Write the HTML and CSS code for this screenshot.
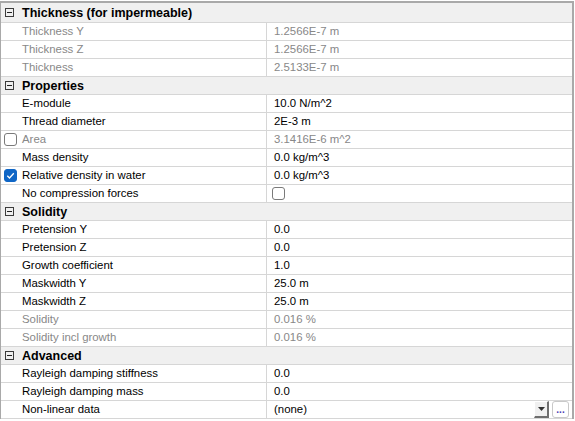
FILE: index.html
```html
<!DOCTYPE html>
<html>
<head>
<meta charset="utf-8">
<link rel="stylesheet" href="styles.css">
</head>
<body>
<div class="grid">
  <div class="cat first"><span class="toggle"></span><span class="cat-title">Thickness (for impermeable)</span></div>
  <div class="row dis"><div class="mg"></div><div class="lbl">Thickness Y</div><div class="val">1.2566E-7 m</div></div>
  <div class="row dis"><div class="mg"></div><div class="lbl">Thickness Z</div><div class="val">1.2566E-7 m</div></div>
  <div class="row dis"><div class="mg"></div><div class="lbl">Thickness</div><div class="val">2.5133E-7 m</div></div>

  <div class="cat"><span class="toggle"></span><span class="cat-title">Properties</span></div>
  <div class="row"><div class="mg"></div><div class="lbl">E-module</div><div class="val">10.0 N/m^2</div></div>
  <div class="row"><div class="mg"></div><div class="lbl">Thread diameter</div><div class="val">2E-3 m</div></div>
  <div class="row dis"><div class="mg"><span class="cb"></span></div><div class="lbl">Area</div><div class="val">3.1416E-6 m^2</div></div>
  <div class="row"><div class="mg"></div><div class="lbl">Mass density</div><div class="val">0.0 kg/m^3</div></div>
  <div class="row"><div class="mg"><span class="cb on"><svg viewBox="0 0 13 13" width="13" height="13"><path d="M3.3 6.8 L5.5 9 L9.8 4.3" fill="none" stroke="#fff" stroke-width="1.3"/></svg></span></div><div class="lbl">Relative density in water</div><div class="val">0.0 kg/m^3</div></div>
  <div class="row"><div class="mg"></div><div class="lbl">No compression forces</div><div class="val"><span class="cb vcb"></span></div></div>

  <div class="cat"><span class="toggle"></span><span class="cat-title">Solidity</span></div>
  <div class="row"><div class="mg"></div><div class="lbl">Pretension Y</div><div class="val">0.0</div></div>
  <div class="row"><div class="mg"></div><div class="lbl">Pretension Z</div><div class="val">0.0</div></div>
  <div class="row"><div class="mg"></div><div class="lbl">Growth coefficient</div><div class="val">1.0</div></div>
  <div class="row"><div class="mg"></div><div class="lbl">Maskwidth Y</div><div class="val">25.0 m</div></div>
  <div class="row"><div class="mg"></div><div class="lbl">Maskwidth Z</div><div class="val">25.0 m</div></div>
  <div class="row dis"><div class="mg"></div><div class="lbl">Solidity</div><div class="val">0.016 %</div></div>
  <div class="row dis"><div class="mg"></div><div class="lbl">Solidity incl growth</div><div class="val">0.016 %</div></div>

  <div class="cat"><span class="toggle"></span><span class="cat-title">Advanced</span></div>
  <div class="row"><div class="mg"></div><div class="lbl">Rayleigh damping stiffness</div><div class="val">0.0</div></div>
  <div class="row"><div class="mg"></div><div class="lbl">Rayleigh damping mass</div><div class="val">0.0</div></div>
  <div class="row"><div class="mg"></div><div class="lbl">Non-linear data</div><div class="val edit"><span class="vtext">(none)</span><span class="dd"><svg viewBox="0 0 7 4" width="7" height="4"><path d="M0 0 H7 L3.5 4 Z" fill="#333"/></svg></span><span class="ell">...</span></div></div>
</div>
</body>
</html>
```

FILE: styles.css
```css
html, body {
  margin: 0;
  padding: 0;
  background: #ffffff;
}
body {
  font-family: "Liberation Sans", Arial, sans-serif;
  font-size: 11.4px;
  color: #000;
}
.grid {
  margin-top: 1px;
  width: 571px;
  border-top: 2px solid #a9a9a9;
  border-left: 1px solid #a9a9a9;
  border-right: 2px solid #a9a9a9;
}
.cat {
  height: 18px;
  box-sizing: border-box;
  border-bottom: 1px solid #d6d6d6;
  background: #f0f0f0;
  display: flex;
  align-items: center;
}
.cat.first {
  height: 20px;
}
.toggle {
  width: 9px;
  height: 9px;
  box-sizing: border-box;
  border: 1px solid #3c3c3c;
  margin-left: 4px;
  margin-right: 8px;
  position: relative;
  flex: none;
}
.toggle::after {
  content: "";
  position: absolute;
  left: 1px;
  right: 1px;
  top: 3px;
  height: 1px;
  background: #222;
}
.cat-title {
  font-weight: bold;
  font-size: 12.5px;
}
.row {
  height: 18px;
  box-sizing: border-box;
  border-bottom: 1px solid #d6d6d6;
  display: grid;
  grid-template-columns: 20px 246px 1fr;
}
.mg {
  display: flex;
  align-items: center;
  padding-left: 3px;
}
.lbl {
  border-right: 1px solid #d6d6d6;
  padding-left: 1px;
  line-height: 17px;
  white-space: nowrap;
}
.val {
  padding-left: 7px;
  line-height: 17px;
  white-space: nowrap;
  display: flex;
  align-items: center;
}
.dis .lbl, .dis .val {
  color: #888888;
}
.cb {
  width: 13px;
  height: 13px;
  box-sizing: border-box;
  border: 1px solid #7a7a7a;
  border-radius: 3px;
  background: #fff;
  display: block;
}
.cb.on {
  background: #0f66c6;
  border-color: #0f66c6;
  position: relative;
}
.cb.on svg {
  position: absolute;
  left: -1px;
  top: -1px;
}
.vcb {
  margin-left: -2px;
}
.edit {
  padding-right: 3px;
}
.vtext {
  flex: 1;
}
.dd {
  width: 15px;
  height: 17px;
  box-sizing: border-box;
  background: #f0f0f0;
  border-right: 2px solid #6e6e6e;
  border-bottom: 2px solid #6e6e6e;
  border-top: 1px solid #fff;
  border-left: 1px solid #fff;
  display: flex;
  align-items: center;
  justify-content: center;
  margin-right: 3px;
}
.ell {
  width: 17px;
  height: 17px;
  box-sizing: border-box;
  border: 1px solid #c9c9c9;
  border-radius: 3px;
  background: #fff;
  color: #4b3bb6;
  font-weight: bold;
  font-size: 10px;
  line-height: 15px;
  text-align: center;
}
```
